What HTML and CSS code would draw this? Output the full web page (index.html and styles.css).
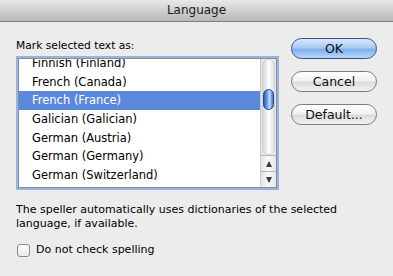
FILE: index.html
```html
<!DOCTYPE html>
<html lang="en">

<head>
    <meta charset="UTF-8">
    <meta name="viewport" content="width=device-width, initial-scale=1.0">
    <title>Language</title>
    <link rel="stylesheet" href="styles.css">
</head>

<body>
    <div class="titlebar">Language</div>

    <div class="content">
        <div class="top">
            <div class="left">
                <div class="label">Mark selected text as:</div>
                <div class="listbox">
                    <div class="list">
                        <div class="rows">
                            <div class="row">Finnish (Finland)</div>
                            <div class="row">French (Canada)</div>
                            <div class="row selected">French (France)</div>
                            <div class="row">Galician (Galician)</div>
                            <div class="row">German (Austria)</div>
                            <div class="row">German (Germany)</div>
                            <div class="row">German (Switzerland)</div>
                        </div>
                    </div>
                    <div class="scrollbar">
                        <div class="track">
                            <div class="thumb"></div>
                        </div>
                        <div class="arrow up"><span></span></div>
                        <div class="arrow down"><span></span></div>
                    </div>
                </div>
            </div>

            <div class="buttons">
                <button class="btn default-btn">OK</button>
                <button class="btn">Cancel</button>
                <button class="btn">Default...</button>
            </div>
        </div>

        <p class="note">The speller automatically uses dictionaries of the selected language, if available.</p>

        <label class="check">
            <span class="box"></span>
            Do not check spelling
        </label>
    </div>
</body>

</html>
```

FILE: styles.css
```css
body {
    margin: 0;
    background-color: #ececec;
    font-family: "DejaVu Sans", sans-serif;
    color: #000;
    height: 276px;
    overflow: hidden;
}

.titlebar {
    height: 21px;
    line-height: 21px;
    text-align: center;
    font-size: 12px;
    color: #1a1a1a;
    background: linear-gradient(#e9e9e9, #cfcfcf 50%, #b9b9b9);
    border-bottom: 1px solid #7f7f7f;
}

.content {
    padding: 17px 0 0 16px;
}

.top {
    display: flex;
}

.left {
    width: 262px;
}

.label {
    font-size: 10.7px;
    line-height: 14px;
}

.listbox {
    display: flex;
    margin: 5px 0 0 2px;
    width: 257px;
    height: 128px;
    border: 1px solid #8d8d8d;
    background: #fff;
    box-shadow: 0 0 0 2px #93b4e4;
    overflow: hidden;
}

.list {
    flex: 1;
    overflow: hidden;
}

.rows {
    margin-top: -5px;
}

.row {
    height: 18.7px;
    line-height: 18.7px;
    padding-left: 13px;
    font-size: 11.5px;
}

.row.selected {
    background-color: #5b88dc;
    color: #fff;
}

.scrollbar {
    width: 15px;
    display: flex;
    flex-direction: column;
    border-left: 1px solid #c9c9c9;
    background: linear-gradient(90deg, #e4e4e4, #fafafa 50%, #e4e4e4);
}

.track {
    flex: 1;
    position: relative;
    margin: 0 1px;
    border-radius: 7px;
    background: linear-gradient(90deg, #cfcfcf, #f4f4f4 40%, #ffffff 55%, #d8d8d8);
    box-shadow: inset 0 0 0 1px #d2d2d2;
}

.thumb {
    position: absolute;
    left: 1px;
    right: 1px;
    top: 30px;
    height: 21px;
    border-radius: 6px;
    border: 1px solid #23478f;
    box-sizing: border-box;
    background: linear-gradient(90deg, #2a5bc0, #7eb1f2 45%, #c7e0fb 60%, #3c6fd0);
}

.arrow {
    height: 15px;
    border-top: 1px solid #b5b5b5;
    display: flex;
    align-items: center;
    justify-content: center;
}

.arrow span {
    width: 0;
    height: 0;
    border-left: 3.5px solid transparent;
    border-right: 3.5px solid transparent;
}

.arrow.up span {
    border-bottom: 6px solid #3a3a3a;
}

.arrow.down span {
    border-top: 6px solid #3a3a3a;
}

.buttons {
    display: flex;
    flex-direction: column;
    gap: 12px;
    margin: -1px 0 0 13px;
}

.btn {
    width: 86px;
    height: 21px;
    padding: 0;
    font-family: "DejaVu Sans", sans-serif;
    font-size: 12.5px;
    color: #111;
    border: 1px solid #7a7a7a;
    border-radius: 11px;
    background: linear-gradient(#ffffff, #f1f1f1 45%, #dcdcdc 55%, #f3f3f3);
}

.default-btn {
    border-color: #3d4f86;
    background: linear-gradient(#d9e8fb, #a9cbf4 45%, #7fb0ef 55%, #b8d7fa);
}

.note {
    margin: 15px 0 0;
    width: 330px;
    font-size: 11px;
    line-height: 13.5px;
}

.check {
    display: flex;
    align-items: center;
    gap: 6px;
    margin-top: 13px;
    font-size: 11px;
    line-height: 14px;
}

.box {
    width: 11px;
    height: 11px;
    margin-left: 1px;
    border: 1px solid #8a8a8a;
    border-radius: 3px;
    background: linear-gradient(#ffffff, #e9e9e9);
}
```
